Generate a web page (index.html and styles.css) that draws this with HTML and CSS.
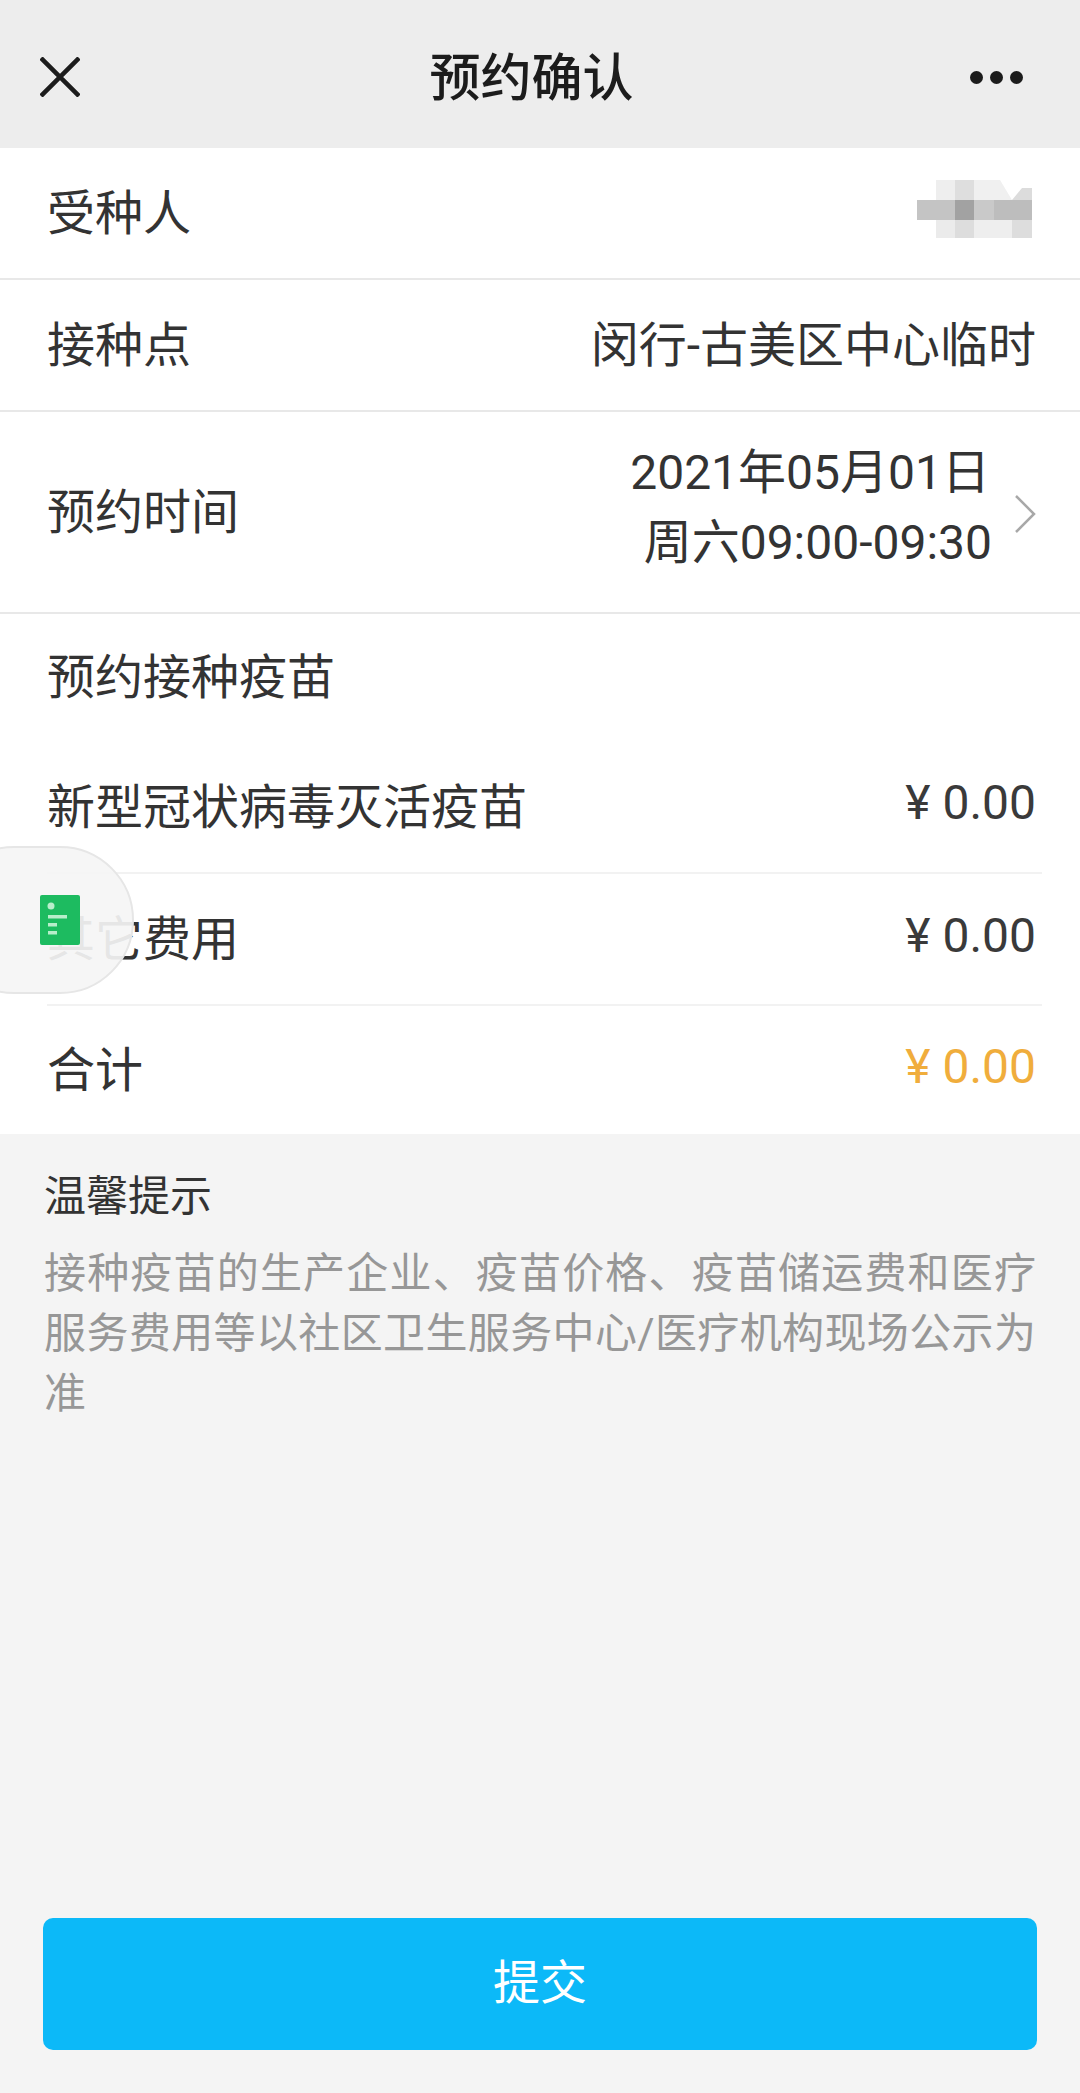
FILE: index.html
```html
<!DOCTYPE html>
<html lang="zh-CN">
<head>
  <meta charset="UTF-8">
  <meta name="viewport" content="width=device-width, initial-scale=1.0">
  <title>预约确认</title>
  <link rel="stylesheet" href="styles.css">
</head>
<body>
  <div class="page">
    <div class="nav">
      <svg class="nav-close" viewBox="0 0 40 40" width="40" height="40">
        <path d="M1 1L39 39M39 1L1 39" stroke="#1c1c1c" stroke-width="4.5" fill="none"/>
      </svg>
      <h1>预约确认</h1>
      <div class="nav-more"><span></span><span></span><span></span></div>
    </div>

    <div class="card">
      <div class="row row-name">
        <span>受种人</span>
        <!-- 打码的姓名 -->
        <svg class="mosaic" viewBox="0 0 115 58" width="115" height="58">
          <rect x="19" y="0" width="19" height="20" fill="#eeeeee"/>
          <rect x="38" y="0" width="19" height="20" fill="#dedede"/>
          <path d="M57 0H83L95 20H57Z" fill="#f0f0f0"/>
          <path d="M95 20L105 8H115V20Z" fill="#dcdcdc"/>
          <rect x="0" y="20" width="38" height="20" fill="#c4c4c4"/>
          <rect x="38" y="20" width="19" height="20" fill="#a2a2a2"/>
          <rect x="57" y="20" width="20" height="20" fill="#c9c9c9"/>
          <rect x="77" y="20" width="38" height="20" fill="#bdbdbd"/>
          <rect x="19" y="40" width="19" height="18" fill="#ebebeb"/>
          <rect x="38" y="40" width="19" height="18" fill="#dddddd"/>
          <rect x="57" y="40" width="38" height="18" fill="#eeeeee"/>
          <rect x="95" y="40" width="20" height="18" fill="#dddddd"/>
        </svg>
      </div>
      <div class="row">
        <span>接种点</span>
        <span>闵行-古美区中心临时</span>
      </div>
      <div class="row row-time">
        <span>预约时间</span>
        <div class="time">
          <div class="time-text">
            <div class="time-date">2021年05月01日</div>
            <div>周六09:00-09:30</div>
          </div>
          <svg class="arrow" viewBox="0 0 22 38" width="22" height="38">
            <path d="M2 1L20 19L2 37" stroke="#a8a8a8" stroke-width="2.5" fill="none"/>
          </svg>
        </div>
      </div>
      <div class="section-title">预约接种疫苗</div>
      <div class="fee fee-first">
        <span>新型冠状病毒灭活疫苗</span>
        <span class="price">¥ 0.00</span>
      </div>
      <div class="fee">
        <span>其它费用</span>
        <span class="price">¥ 0.00</span>
      </div>
      <div class="fee fee-last">
        <span>合计</span>
        <span class="price price-total">¥ 0.00</span>
      </div>
    </div>

    <div class="tips">
      <div class="tips-title">温馨提示</div>
      <p>接种疫苗的生产企业、疫苗价格、疫苗储运费和医疗服务费用等以社区卫生服务中心/医疗机构现场公示为准</p>
    </div>

    <div class="footer">
      <button class="submit-btn">提交</button>
    </div>

    <!-- 悬浮入口 -->
    <div class="float-tab">
      <svg viewBox="0 0 40 50" width="40" height="50">
        <rect width="40" height="50" rx="2" fill="#1dbb60"/>
        <circle cx="11" cy="11" r="3.5" fill="#b8eecb"/>
        <rect x="8" y="20" width="19" height="3.5" fill="#b8eecb"/>
        <rect x="8" y="28" width="9" height="3.5" fill="#b8eecb"/>
        <rect x="8" y="36" width="9" height="3.5" fill="#b8eecb"/>
      </svg>
    </div>
  </div>
</body>
</html>
```

FILE: styles.css
```css
* {
  margin: 0;
  padding: 0;
  box-sizing: border-box;
}

body {
  font-family: 'Roboto', 'Noto Sans CJK SC', sans-serif;
  background: #f4f4f4;
  color: #333;
}

.page {
  position: relative;
  height: 2093px;
  display: flex;
  flex-direction: column;
  overflow: hidden;
}

.nav {
  height: 148px;
  flex-shrink: 0;
  background: #ededed;
  display: grid;
  grid-template-columns: 1fr auto 1fr;
  align-items: center;
  padding: 0 57px 0 40px;
}

.nav h1 {
  font-size: 51px;
  font-weight: 500;
  color: #1c1c1c;
}

.nav-close {
  margin-top: 6px;
}

.nav-more {
  justify-self: end;
  display: flex;
  gap: 7px;
  margin-top: 6px;
}

.nav-more span {
  width: 13px;
  height: 13px;
  border-radius: 50%;
  background: #1c1c1c;
}

.card {
  background: #fff;
}

.row {
  height: 132px;
  display: flex;
  align-items: center;
  justify-content: space-between;
  padding: 0 44px 8px 47px;
  font-size: 48px;
  border-bottom: 2px solid #e8e8e8;
}

.row-name {
  padding-right: 48px;
}

.mosaic {
  filter: blur(0.6px);
}

.row-time {
  height: 202px;
}

.time {
  display: flex;
  align-items: center;
  gap: 22px;
}

.time-text {
  text-align: right;
  line-height: 70px;
}

.time-date {
  margin-right: 2px;
}

.arrow {
  margin-top: 12px;
}

.section-title {
  height: 127px;
  padding: 0 47px 10px;
  font-size: 48px;
  display: flex;
  align-items: center;
}

.fee {
  height: 132px;
  margin-left: 47px;
  margin-right: 38px;
  padding: 0 6px 8px 0;
  display: flex;
  align-items: center;
  justify-content: space-between;
  font-size: 48px;
  border-top: 2px solid #f2f2f2;
}

.fee-first {
  border-top: none;
  height: 131px;
}

.fee-last {
  height: 130px;
}

.price {
  color: #3a3a3a;
}

.price-total {
  color: #f0ad3c;
}

.tips {
  padding: 32px 44px 0;
}

.tips-title {
  font-size: 42px;
  line-height: 62px;
  color: #333;
}

.tips p {
  font-size: 42px;
  line-height: 60px;
  margin-top: 16px;
  color: #979797;
  text-align: justify;
}

.footer {
  margin-top: auto;
  padding: 0 43px 43px;
}

.submit-btn {
  width: 100%;
  height: 132px;
  padding-bottom: 12px;
  border: none;
  border-radius: 10px;
  background: #0cb9f8;
  color: #fff;
  font-family: inherit;
  font-size: 47px;
}

.float-tab {
  position: absolute;
  left: -60px;
  top: 846px;
  width: 194px;
  height: 148px;
  padding-left: 98px;
  display: flex;
  align-items: center;
  border-radius: 74px;
  border: 2px solid #e6e6e6;
  background: rgba(245, 245, 245, 0.92);
}
```
